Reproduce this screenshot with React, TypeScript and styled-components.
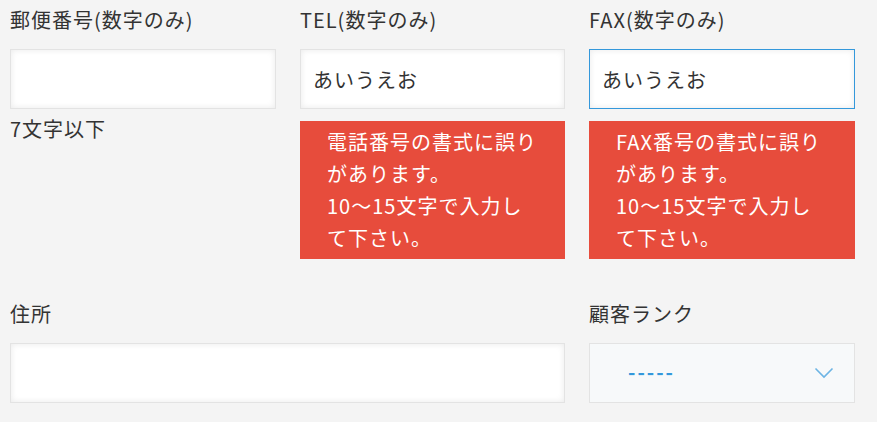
import { createGlobalStyle, styled } from "styled-components";

const GlobalStyle = createGlobalStyle`
  html, body {
    margin: 0;
    padding: 0;
    background: #f4f4f4;
  }
  body {
    font-family: "Noto Sans CJK JP", "Noto Sans", sans-serif;
    color: #333333;
  }
`;

const App = () => {
  return (
    <>
      <GlobalStyle />
      <Form>
        <Field>
          <Label>郵便番号(数字のみ)</Label>
          <Input />
          <Hint>7文字以下</Hint>
        </Field>
        <Field>
          <Label>TEL(数字のみ)</Label>
          <Input defaultValue="あいうえお" />
          <ErrorBox>
            電話番号の書式に誤りがあります。
            <br />
            10〜15文字で入力して下さい。
          </ErrorBox>
        </Field>
        <Field>
          <Label>FAX(数字のみ)</Label>
          <Input defaultValue="あいうえお" $focused />
          <ErrorBox>
            FAX番号の書式に誤りがあります。
            <br />
            10〜15文字で入力して下さい。
          </ErrorBox>
        </Field>
        <Field $span={2}>
          <Label>住所</Label>
          <Input />
        </Field>
        <Field>
          <Label>顧客ランク</Label>
          <Select>
            <SelectValue>-----</SelectValue>
            <Chevron width="20" height="12" viewBox="0 0 20 12">
              <polyline
                points="1.5,1.5 10,10 18.5,1.5"
                fill="none"
                stroke="#6cb4e4"
                strokeWidth="1.6"
              />
            </Chevron>
          </Select>
        </Field>
      </Form>
    </>
  );
};

const Form = styled.div`
  display: grid;
  grid-template-columns: 266px 265px 266px;
  column-gap: 24px;
  row-gap: 40px;
  padding: 5px 0 0 10px;
`;

const Field = styled.div<{ $span?: number }>`
  display: flex;
  flex-direction: column;
  grid-column: span ${(p) => p.$span ?? 1};
`;

const Label = styled.div`
  font-size: 20px;
  letter-spacing: 1px;
  line-height: 30px;
  height: 30px;
  margin-bottom: 14px;
  white-space: nowrap;
`;

const Input = styled.input<{ $focused?: boolean }>`
  box-sizing: border-box;
  width: 100%;
  height: 60px;
  padding: 0 12px;
  border: 1px solid ${(p) => (p.$focused ? "#3498db" : "#e3e3e3")};
  background: #ffffff;
  box-shadow: inset 0 0 6px rgba(0, 0, 0, 0.09);
  font-family: "Noto Sans CJK JP", "Noto Sans", sans-serif;
  font-size: 20px;
  letter-spacing: 1px;
  color: #333333;
  outline: none;
`;

const Hint = styled.div`
  margin-top: 5px;
  font-size: 20px;
  letter-spacing: 1px;
  line-height: 30px;
`;

const ErrorBox = styled.div`
  box-sizing: border-box;
  margin-top: 12px;
  padding: 5px 26px 5px 27px;
  background: #e74c3c;
  color: #ffffff;
  font-size: 20px;
  letter-spacing: 1px;
  line-height: 32px;
  min-height: 138px;
`;

const Select = styled.div`
  box-sizing: border-box;
  height: 60px;
  display: flex;
  align-items: center;
  justify-content: space-between;
  padding: 0 20px 0 38px;
  background: #f7f9fa;
  border: 1px solid #e3e3e3;
`;

const SelectValue = styled.span`
  color: #3498db;
  font-size: 20px;
  font-weight: 700;
  letter-spacing: 2px;
  margin-top: -3px;
`;

const Chevron = styled.svg`
  display: block;
`;

export default App;
